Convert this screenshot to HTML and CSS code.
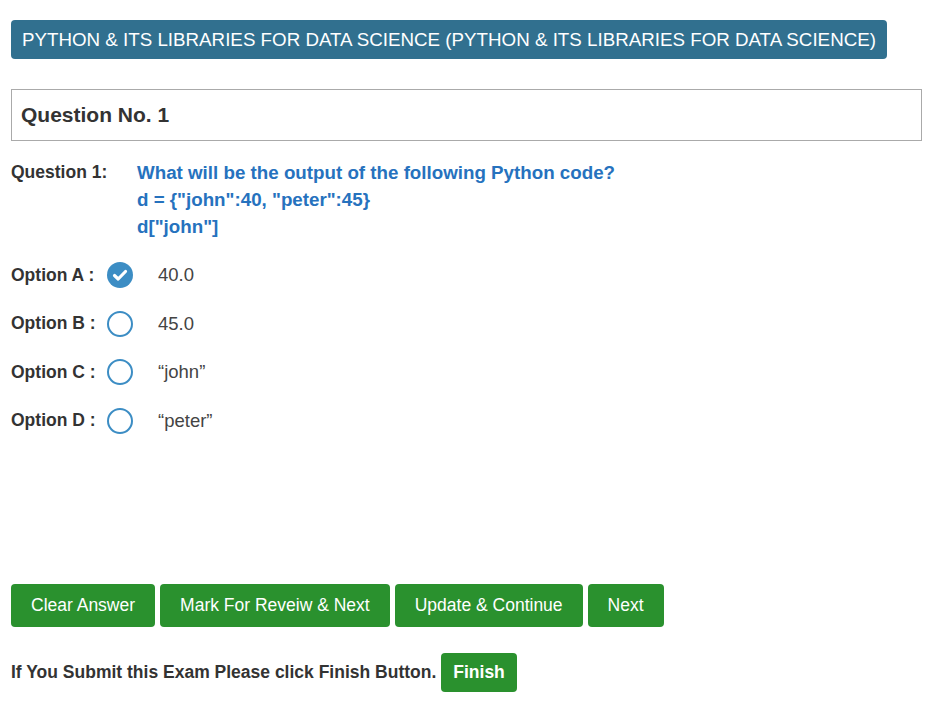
FILE: index.html
```html
<!DOCTYPE html>
<html>
<head>
<meta charset="utf-8">
<link rel="stylesheet" href="styles.css">
</head>
<body>
<div class="page">
  <div class="title">PYTHON &amp; ITS LIBRARIES FOR DATA SCIENCE (PYTHON &amp; ITS LIBRARIES FOR DATA SCIENCE)</div>
  <div class="qbox">Question No. 1</div>
  <div class="question">
    <div class="qlabel">Question 1:</div>
    <div class="qtext">
      <div>What will be the output of the following Python code?</div>
      <div>d = {"john":40, "peter":45}</div>
      <div>d["john"]</div>
    </div>
  </div>
  <div class="options">
    <div class="option">
      <div class="olabel">Option A :</div>
      <span class="radio checked"><svg viewBox="0 0 26 26" width="26" height="26"><path d="M7.5 13.5 L11.2 17 L18.5 9.5" fill="none" stroke="#fff" stroke-width="3.2" stroke-linecap="round" stroke-linejoin="round"/></svg></span>
      <div class="otext">40.0</div>
    </div>
    <div class="option">
      <div class="olabel">Option B :</div>
      <span class="radio"></span>
      <div class="otext">45.0</div>
    </div>
    <div class="option">
      <div class="olabel">Option C :</div>
      <span class="radio"></span>
      <div class="otext">“john”</div>
    </div>
    <div class="option">
      <div class="olabel">Option D :</div>
      <span class="radio"></span>
      <div class="otext">“peter”</div>
    </div>
  </div>
  <div class="actions">
    <button class="btn">Clear Answer</button>
    <button class="btn">Mark For Reveiw &amp; Next</button>
    <button class="btn">Update &amp; Continue</button>
    <button class="btn">Next</button>
  </div>
  <div class="finish-row">
    <span class="finish-label">If You Submit this Exam Please click Finish Button.</span>
    <button class="btn finish">Finish</button>
  </div>
</div>
</body>
</html>
```
FILE: styles.css
```css
html, body {
  margin: 0;
  padding: 0;
  background: #fff;
}
body {
  font-family: "Liberation Sans", Arial, sans-serif;
  color: #333;
}
.page {
  padding: 20px 11px;
}
.title {
  display: inline-block;
  background: #31708f;
  color: #fff;
  font-size: 18.75px;
  line-height: 21px;
  padding: 9px 11px;
  border-radius: 4px;
}
.qbox {
  margin-top: 30px;
  border: 1px solid #aaa;
  padding: 14px 9px;
  font-size: 21px;
  line-height: 22px;
  font-weight: bold;
  color: #333;
}
.question {
  display: flex;
  margin-top: 18px;
  font-weight: bold;
  line-height: 27px;
}
.qlabel {
  width: 126px;
  font-size: 17.5px;
  color: #333;
}
.qtext {
  font-size: 18.75px;
  color: #2672be;
}
.options {
  margin-top: 11px;
}
.option {
  display: flex;
  align-items: center;
  height: 48.5px;
}
.olabel {
  width: 96px;
  font-weight: bold;
  font-size: 17.5px;
  color: #333;
}
.radio {
  box-sizing: border-box;
  width: 26px;
  height: 26px;
  border-radius: 50%;
  border: 2px solid #3c8dc4;
  display: inline-block;
}
.radio.checked {
  border: none;
  background: #3c8dc4;
}
.radio svg {
  display: block;
}
.otext {
  margin-left: 25px;
  font-size: 18.5px;
  color: #444;
}
.actions {
  display: flex;
  gap: 5px;
  margin-top: 139px;
}
.btn {
  font-family: "Liberation Sans", Arial, sans-serif;
  background: #2a912e;
  color: #fff;
  border: none;
  border-radius: 4px;
  font-size: 17.5px;
  line-height: 25px;
  padding: 9px 20px;
  margin: 0;
}
.finish-row {
  display: flex;
  align-items: center;
  gap: 5px;
  margin-top: 26px;
}
.finish-label {
  font-weight: bold;
  font-size: 17.5px;
  color: #333;
}
.btn.finish {
  font-weight: bold;
  font-size: 17.5px;
  line-height: 23px;
  padding: 8px 12px;
}
```
